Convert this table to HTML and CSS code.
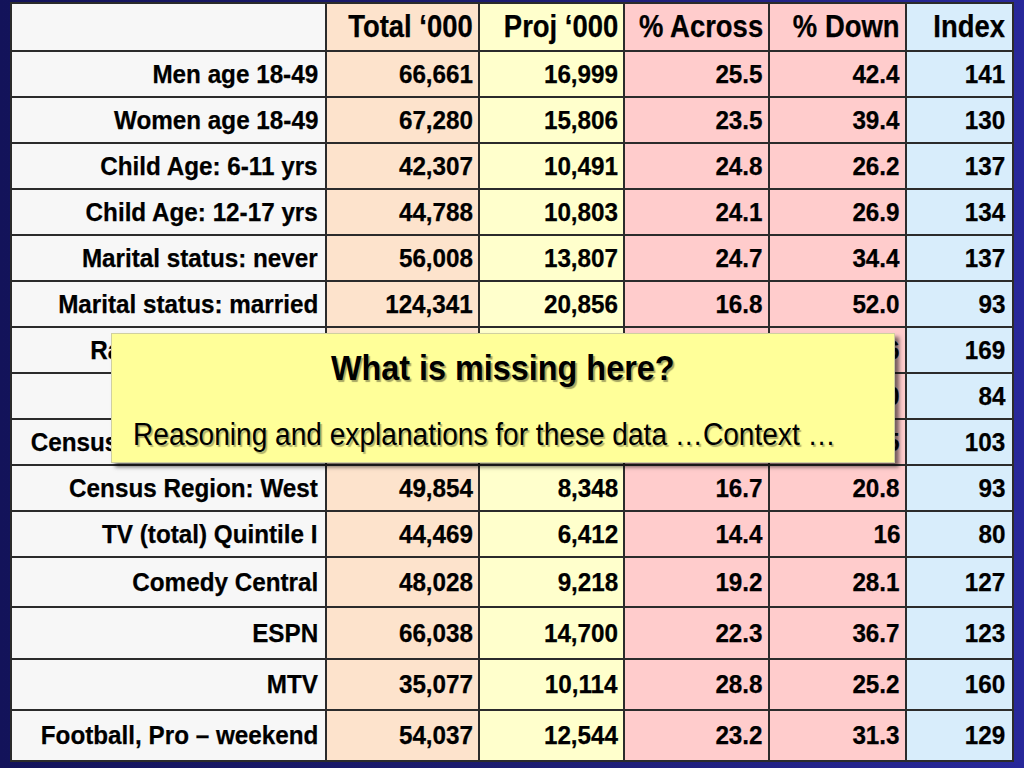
FILE: index.html
```html
<!DOCTYPE html>
<html>
<head>
<meta charset="utf-8">
<link rel="stylesheet" href="styles.css">
</head>
<body>
<div class="slide">
  <table class="data">
    <colgroup>
      <col class="c-label"><col class="c-total"><col class="c-proj"><col class="c-across"><col class="c-down"><col class="c-index">
    </colgroup>
    <thead>
      <tr>
        <th class="label"></th>
        <th class="total"><div class="cell"><span class="t">Total ‘000</span></div></th>
        <th class="proj"><div class="cell"><span class="t">Proj ‘000</span></div></th>
        <th class="across"><div class="cell"><span class="t">% Across</span></div></th>
        <th class="down"><div class="cell"><span class="t">% Down</span></div></th>
        <th class="index"><div class="cell"><span class="t">Index</span></div></th>
      </tr>
    </thead>
    <tbody>
      <tr><td class="label"><div class="cell"><span class="t">Men age 18-49</span></div></td><td class="total"><div class="cell"><span class="t">66,661</span></div></td><td class="proj"><div class="cell"><span class="t">16,999</span></div></td><td class="across"><div class="cell"><span class="t">25.5</span></div></td><td class="down"><div class="cell"><span class="t">42.4</span></div></td><td class="index"><div class="cell"><span class="t">141</span></div></td></tr>
      <tr><td class="label"><div class="cell"><span class="t">Women age 18-49</span></div></td><td class="total"><div class="cell"><span class="t">67,280</span></div></td><td class="proj"><div class="cell"><span class="t">15,806</span></div></td><td class="across"><div class="cell"><span class="t">23.5</span></div></td><td class="down"><div class="cell"><span class="t">39.4</span></div></td><td class="index"><div class="cell"><span class="t">130</span></div></td></tr>
      <tr><td class="label"><div class="cell"><span class="t">Child Age: 6-11 yrs</span></div></td><td class="total"><div class="cell"><span class="t">42,307</span></div></td><td class="proj"><div class="cell"><span class="t">10,491</span></div></td><td class="across"><div class="cell"><span class="t">24.8</span></div></td><td class="down"><div class="cell"><span class="t">26.2</span></div></td><td class="index"><div class="cell"><span class="t">137</span></div></td></tr>
      <tr><td class="label"><div class="cell"><span class="t">Child Age: 12-17 yrs</span></div></td><td class="total"><div class="cell"><span class="t">44,788</span></div></td><td class="proj"><div class="cell"><span class="t">10,803</span></div></td><td class="across"><div class="cell"><span class="t">24.1</span></div></td><td class="down"><div class="cell"><span class="t">26.9</span></div></td><td class="index"><div class="cell"><span class="t">134</span></div></td></tr>
      <tr><td class="label"><div class="cell"><span class="t">Marital status: never</span></div></td><td class="total"><div class="cell"><span class="t">56,008</span></div></td><td class="proj"><div class="cell"><span class="t">13,807</span></div></td><td class="across"><div class="cell"><span class="t">24.7</span></div></td><td class="down"><div class="cell"><span class="t">34.4</span></div></td><td class="index"><div class="cell"><span class="t">137</span></div></td></tr>
      <tr><td class="label"><div class="cell"><span class="t">Marital status: married</span></div></td><td class="total"><div class="cell"><span class="t">124,341</span></div></td><td class="proj"><div class="cell"><span class="t">20,856</span></div></td><td class="across"><div class="cell"><span class="t">16.8</span></div></td><td class="down"><div class="cell"><span class="t">52.0</span></div></td><td class="index"><div class="cell"><span class="t">93</span></div></td></tr>
      <tr><td class="label"><div class="cell"><span class="t">Race: Black/African</span></div></td><td class="total"><div class="cell"><span class="t">25,521</span></div></td><td class="proj"><div class="cell"><span class="t">8,690</span></div></td><td class="across"><div class="cell"><span class="t">34.1</span></div></td><td class="down"><div class="cell"><span class="t">21.6</span></div></td><td class="index"><div class="cell"><span class="t">169</span></div></td></tr>
      <tr><td class="label"><div class="cell"><span class="t">Race: White</span></div></td><td class="total"><div class="cell"><span class="t">161,876</span></div></td><td class="proj"><div class="cell"><span class="t">27,540</span></div></td><td class="across"><div class="cell"><span class="t">17.0</span></div></td><td class="down"><div class="cell"><span class="t">68.0</span></div></td><td class="index"><div class="cell"><span class="t">84</span></div></td></tr>
      <tr><td class="label"><div class="cell"><span class="t">Census Region: Midwest</span></div></td><td class="total"><div class="cell"><span class="t">48,944</span></div></td><td class="proj"><div class="cell"><span class="t">10,320</span></div></td><td class="across"><div class="cell"><span class="t">21.1</span></div></td><td class="down"><div class="cell"><span class="t">25.5</span></div></td><td class="index"><div class="cell"><span class="t">103</span></div></td></tr>
      <tr><td class="label"><div class="cell"><span class="t">Census Region: West</span></div></td><td class="total"><div class="cell"><span class="t">49,854</span></div></td><td class="proj"><div class="cell"><span class="t">8,348</span></div></td><td class="across"><div class="cell"><span class="t">16.7</span></div></td><td class="down"><div class="cell"><span class="t">20.8</span></div></td><td class="index"><div class="cell"><span class="t">93</span></div></td></tr>
      <tr><td class="label"><div class="cell"><span class="t">TV (total) Quintile I</span></div></td><td class="total"><div class="cell"><span class="t">44,469</span></div></td><td class="proj"><div class="cell"><span class="t">6,412</span></div></td><td class="across"><div class="cell"><span class="t">14.4</span></div></td><td class="down"><div class="cell"><span class="t">16</span></div></td><td class="index"><div class="cell"><span class="t">80</span></div></td></tr>
      <tr class="r50"><td class="label"><div class="cell"><span class="t">Comedy Central</span></div></td><td class="total"><div class="cell"><span class="t">48,028</span></div></td><td class="proj"><div class="cell"><span class="t">9,218</span></div></td><td class="across"><div class="cell"><span class="t">19.2</span></div></td><td class="down"><div class="cell"><span class="t">28.1</span></div></td><td class="index"><div class="cell"><span class="t">127</span></div></td></tr>
      <tr class="r52"><td class="label"><div class="cell"><span class="t">ESPN</span></div></td><td class="total"><div class="cell"><span class="t">66,038</span></div></td><td class="proj"><div class="cell"><span class="t">14,700</span></div></td><td class="across"><div class="cell"><span class="t">22.3</span></div></td><td class="down"><div class="cell"><span class="t">36.7</span></div></td><td class="index"><div class="cell"><span class="t">123</span></div></td></tr>
      <tr class="r51"><td class="label"><div class="cell"><span class="t">MTV</span></div></td><td class="total"><div class="cell"><span class="t">35,077</span></div></td><td class="proj"><div class="cell"><span class="t">10,114</span></div></td><td class="across"><div class="cell"><span class="t">28.8</span></div></td><td class="down"><div class="cell"><span class="t">25.2</span></div></td><td class="index"><div class="cell"><span class="t">160</span></div></td></tr>
      <tr class="r51"><td class="label"><div class="cell"><span class="t">Football, Pro – weekend</span></div></td><td class="total"><div class="cell"><span class="t">54,037</span></div></td><td class="proj"><div class="cell"><span class="t">12,544</span></div></td><td class="across"><div class="cell"><span class="t">23.2</span></div></td><td class="down"><div class="cell"><span class="t">31.3</span></div></td><td class="index"><div class="cell"><span class="t">129</span></div></td></tr>
    </tbody>
  </table>
  <div class="callout">
    <h2 class="callout-title"><span class="ct">What is missing here?</span></h2>
    <p class="callout-text"><span class="cb">Reasoning and explanations for these data …Context …</span></p>
  </div>
</div>
</body>
</html>
```
FILE: styles.css
```css
html, body {
  margin: 0;
  padding: 0;
}
body {
  width: 1024px;
  height: 768px;
  overflow: hidden;
  background: #1b1b6a;
}
.slide {
  position: relative;
  width: 1024px;
  height: 768px;
  box-sizing: border-box;
  padding: 2px 12px 0 10px;
  background: linear-gradient(90deg, #13135a 0%, #1c1c70 50%, #28289a 100%);
}
.data {
  border-collapse: collapse;
  table-layout: fixed;
  width: 1002px;
  font-family: "Liberation Sans", Arial, sans-serif;
  font-weight: bold;
  color: #000;
  -webkit-text-stroke: 0.25px #000;
}
.c-label { width: 315px; }
.c-total { width: 153px; }
.c-proj { width: 145px; }
.c-across { width: 145px; }
.c-down { width: 137px; }
.c-index { width: 107px; }
.data th, .data td {
  border: 2px solid #2b2b2b;
  padding: 0 5px 0 3px;
  white-space: nowrap;
  overflow: hidden;
}
.data th.label, .data td.label {
  padding-right: 7px;
}
.data th.index, .data td.index {
  padding-right: 7px;
}
.data th {
  font-size: 31px;
  height: 46px;
}
.data td {
  font-size: 26.5px;
  height: 44px;
}
.data tr.r50 td { height: 48px; }
.data tr.r52 td { height: 50px; }
.data tr.r51 td { height: 49px; }
.cell {
  display: flex;
  justify-content: flex-end;
  align-items: center;
}
.t {
  display: inline-block;
  flex: none;
  transform: scaleX(0.915);
  transform-origin: 100% 50%;
}
.data th .t {
  transform: scaleX(0.885);
}
.label { background: #f7f7f7; }
.total { background: #fde3cc; }
.proj { background: #ffffcc; }
.across, .down { background: #ffcccc; }
.index { background: #d8edfb; }

.callout {
  position: absolute;
  left: 111px;
  top: 333px;
  width: 784px;
  height: 130px;
  box-sizing: border-box;
  background: #ffff99;
  border: 1px solid #d0d0a0;
  box-shadow: 4px 4px 4px rgba(0, 0, 0, 0.55);
  font-family: "Liberation Sans", Arial, sans-serif;
  color: #000;
}
.callout-title {
  margin: 13px 0 0 0;
  text-align: center;
  font-size: 35px;
  font-weight: bold;
  line-height: 42px;
  text-shadow: 2px 2px 1px rgba(0, 0, 0, 0.35);
}
.ct {
  display: inline-block;
  transform: scaleX(0.925);
  transform-origin: 50% 50%;
}
.callout-text {
  margin: 28px 0 0 21px;
  font-size: 31px;
  font-weight: normal;
  line-height: 36px;
  white-space: nowrap;
  text-shadow: 2px 2px 1px rgba(0, 0, 0, 0.3);
}
.cb {
  display: inline-block;
  transform: scaleX(0.906);
  transform-origin: 0 50%;
}
```
